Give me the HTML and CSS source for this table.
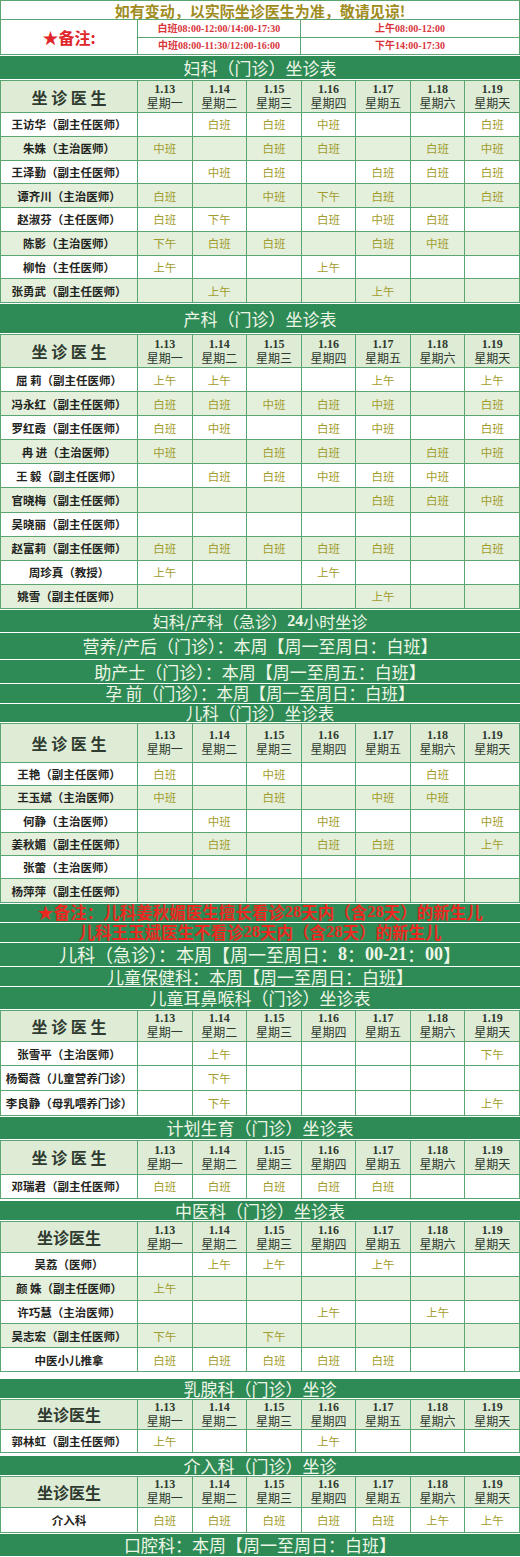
FILE: index.html
```html
<!DOCTYPE html>
<html lang="zh-CN">
<head>
<meta charset="utf-8">
<title>坐诊表</title>
<link rel="stylesheet" href="styles.css">
</head>
<body>
<div class="page">

<table class="notice">
<colgroup><col class="c1"><col class="c2"><col class="c3"></colgroup>
<tr class="top"><td colspan="3" class="warn">如有变动，以实际坐诊医生为准，敬请见谅!</td></tr>
<tr class="tr"><td rowspan="2" class="star">★备注:</td><td class="tm">白班<span class="num">08:00-12:00/14:00-17:30</span></td><td class="tm">上午<span class="num">08:00-12:00</span></td></tr>
<tr class="tr"><td class="tm">中班<span class="num">08:00-11:30/12:00-16:00</span></td><td class="tm">下午<span class="num">14:00-17:30</span></td></tr>
</table>

<div class="band b23">妇科（门诊）坐诊表</div>
<table class="grid striped g-fk">
<colgroup><col class="name"><col><col><col><col><col><col><col></colgroup>
<tr class="hd"><td class="title">坐 诊 医 生</td><td><span class="date">1.13</span><span class="wd">星期一</span></td><td><span class="date">1.14</span><span class="wd">星期二</span></td><td><span class="date">1.15</span><span class="wd">星期三</span></td><td><span class="date">1.16</span><span class="wd">星期四</span></td><td><span class="date">1.17</span><span class="wd">星期五</span></td><td><span class="date">1.18</span><span class="wd">星期六</span></td><td><span class="date">1.19</span><span class="wd">星期天</span></td></tr>
<tr><td class="nm">王访华（副主任医师）</td><td></td><td>白班</td><td>白班</td><td>中班</td><td></td><td></td><td>白班</td></tr>
<tr><td class="nm">朱姝（主治医师）</td><td>中班</td><td></td><td>白班</td><td>白班</td><td></td><td>白班</td><td>中班</td></tr>
<tr><td class="nm">王泽勤（副主任医师）</td><td></td><td>中班</td><td>白班</td><td></td><td>白班</td><td>白班</td><td>白班</td></tr>
<tr><td class="nm">谭齐川（主治医师）</td><td>白班</td><td></td><td>中班</td><td>下午</td><td>白班</td><td></td><td>白班</td></tr>
<tr><td class="nm">赵淑芬（主任医师）</td><td>白班</td><td>下午</td><td></td><td>白班</td><td>中班</td><td>白班</td><td></td></tr>
<tr><td class="nm">陈影（主治医师）</td><td>下午</td><td>白班</td><td>白班</td><td></td><td>白班</td><td>中班</td><td></td></tr>
<tr><td class="nm">柳怡（主任医师）</td><td>上午</td><td></td><td></td><td>上午</td><td></td><td></td><td></td></tr>
<tr><td class="nm">张勇武（副主任医师）</td><td></td><td>上午</td><td></td><td></td><td>上午</td><td></td><td></td></tr>
</table>

<div class="band b29">产科（门诊）坐诊表</div>
<table class="grid striped g-ck">
<colgroup><col class="name"><col><col><col><col><col><col><col></colgroup>
<tr class="hd"><td class="title">坐 诊 医 生</td><td><span class="date">1.13</span><span class="wd">星期一</span></td><td><span class="date">1.14</span><span class="wd">星期二</span></td><td><span class="date">1.15</span><span class="wd">星期三</span></td><td><span class="date">1.16</span><span class="wd">星期四</span></td><td><span class="date">1.17</span><span class="wd">星期五</span></td><td><span class="date">1.18</span><span class="wd">星期六</span></td><td><span class="date">1.19</span><span class="wd">星期天</span></td></tr>
<tr><td class="nm">屈 莉（副主任医师）</td><td>上午</td><td>上午</td><td></td><td></td><td>上午</td><td></td><td>上午</td></tr>
<tr><td class="nm">冯永红（副主任医师）</td><td>白班</td><td>白班</td><td>中班</td><td>白班</td><td>中班</td><td></td><td>白班</td></tr>
<tr><td class="nm">罗红霞（副主任医师）</td><td>白班</td><td>中班</td><td></td><td>白班</td><td>中班</td><td></td><td>白班</td></tr>
<tr><td class="nm">冉 进（主治医师）</td><td>中班</td><td></td><td>白班</td><td>白班</td><td></td><td>白班</td><td>中班</td></tr>
<tr><td class="nm">王 毅（副主任医师）</td><td></td><td>白班</td><td>白班</td><td>中班</td><td>白班</td><td>中班</td><td></td></tr>
<tr><td class="nm">官晓梅（副主任医师）</td><td></td><td></td><td></td><td></td><td>白班</td><td>白班</td><td>中班</td></tr>
<tr><td class="nm">吴晓丽（副主任医师）</td><td></td><td></td><td></td><td></td><td></td><td></td><td></td></tr>
<tr><td class="nm">赵富莉（副主任医师）</td><td>白班</td><td>白班</td><td>白班</td><td>白班</td><td>白班</td><td></td><td>白班</td></tr>
<tr><td class="nm">周珍真（教授）</td><td>上午</td><td></td><td></td><td>上午</td><td></td><td></td><td></td></tr>
<tr><td class="nm">姚雪（副主任医师）</td><td></td><td></td><td></td><td></td><td>上午</td><td></td><td></td></tr>
</table>

<div class="band b22 sm">妇科/产科（急诊）<span class="num">24</span>小时坐诊</div>
<div class="band b26">营养/产后（门诊）：本周【周一至周日：白班】</div>
<div class="band b23">助产士（门诊）：本周【周一至周五：白班】</div>
<div class="band b19 tight">孕 前（门诊）：本周【周一至周日：白班】</div>
<div class="band b18 tight">儿科（门诊）坐诊表</div>
<table class="grid striped g-ek">
<colgroup><col class="name"><col><col><col><col><col><col><col></colgroup>
<tr class="hd"><td class="title">坐 诊 医 生</td><td><span class="date">1.13</span><span class="wd">星期一</span></td><td><span class="date">1.14</span><span class="wd">星期二</span></td><td><span class="date">1.15</span><span class="wd">星期三</span></td><td><span class="date">1.16</span><span class="wd">星期四</span></td><td><span class="date">1.17</span><span class="wd">星期五</span></td><td><span class="date">1.18</span><span class="wd">星期六</span></td><td><span class="date">1.19</span><span class="wd">星期天</span></td></tr>
<tr><td class="nm">王艳（副主任医师）</td><td>白班</td><td></td><td>中班</td><td></td><td></td><td>白班</td><td></td></tr>
<tr><td class="nm">王玉斌（主治医师）</td><td>中班</td><td></td><td>白班</td><td></td><td>中班</td><td>中班</td><td></td></tr>
<tr><td class="nm">何静（主治医师）</td><td></td><td>中班</td><td></td><td>中班</td><td></td><td></td><td>中班</td></tr>
<tr><td class="nm">姜秋媚（副主任医师）</td><td></td><td>白班</td><td></td><td>白班</td><td>白班</td><td></td><td>上午</td></tr>
<tr><td class="nm">张蕾（主治医师）</td><td></td><td></td><td></td><td></td><td></td><td></td><td></td></tr>
<tr><td class="nm">杨萍萍（副主任医师）</td><td></td><td></td><td></td><td></td><td></td><td></td><td></td></tr>
</table>

<div class="band b18 red">★备注：儿科姜秋媚医生擅长看诊<span class="num">28</span>天内（含<span class="num">28</span>天）的新生儿</div>
<div class="band b19 red">儿科王玉斌医生不看诊<span class="num">28</span>天内（含<span class="num">28</span>天）的新生儿</div>
<div class="band b23 lg">儿科（急诊）：本周【周一至周日：<span class="num">8</span>：<span class="num">00-21</span>：<span class="num">00</span>】</div>
<div class="band b19">儿童保健科：本周【周一至周日：白班】</div>
<div class="band b22">儿童耳鼻喉科（门诊）坐诊表</div>
<table class="grid g-ent">
<colgroup><col class="name"><col><col><col><col><col><col><col></colgroup>
<tr class="hd"><td class="title">坐 诊 医 生</td><td><span class="date">1.13</span><span class="wd">星期一</span></td><td><span class="date">1.14</span><span class="wd">星期二</span></td><td><span class="date">1.15</span><span class="wd">星期三</span></td><td><span class="date">1.16</span><span class="wd">星期四</span></td><td><span class="date">1.17</span><span class="wd">星期五</span></td><td><span class="date">1.18</span><span class="wd">星期六</span></td><td><span class="date">1.19</span><span class="wd">星期天</span></td></tr>
<tr><td class="nm">张雪平（主治医师）</td><td></td><td>上午</td><td></td><td></td><td></td><td></td><td>下午</td></tr>
<tr><td class="nm">杨蜀薇（儿童营养门诊）</td><td></td><td>下午</td><td></td><td></td><td></td><td></td><td></td></tr>
<tr><td class="nm">李良静（母乳喂养门诊）</td><td></td><td>下午</td><td></td><td></td><td></td><td></td><td>上午</td></tr>
</table>

<div class="band b22">计划生育（门诊）坐诊表</div>
<table class="grid g-jh">
<colgroup><col class="name"><col><col><col><col><col><col><col></colgroup>
<tr class="hd"><td class="title">坐 诊 医 生</td><td><span class="date">1.13</span><span class="wd">星期一</span></td><td><span class="date">1.14</span><span class="wd">星期二</span></td><td><span class="date">1.15</span><span class="wd">星期三</span></td><td><span class="date">1.16</span><span class="wd">星期四</span></td><td><span class="date">1.17</span><span class="wd">星期五</span></td><td><span class="date">1.18</span><span class="wd">星期六</span></td><td><span class="date">1.19</span><span class="wd">星期天</span></td></tr>
<tr><td class="nm">邓瑞君（副主任医师）</td><td>白班</td><td>白班</td><td>白班</td><td>白班</td><td>白班</td><td></td><td></td></tr>
</table>

<div class="band b19 spaced">中医科（门诊）坐诊表</div>
<table class="grid striped g-zy">
<colgroup><col class="name"><col><col><col><col><col><col><col></colgroup>
<tr class="hd"><td class="title">坐诊医生</td><td><span class="date">1.13</span><span class="wd">星期一</span></td><td><span class="date">1.14</span><span class="wd">星期二</span></td><td><span class="date">1.15</span><span class="wd">星期三</span></td><td><span class="date">1.16</span><span class="wd">星期四</span></td><td><span class="date">1.17</span><span class="wd">星期五</span></td><td><span class="date">1.18</span><span class="wd">星期六</span></td><td><span class="date">1.19</span><span class="wd">星期天</span></td></tr>
<tr><td class="nm">吴荔（医师）</td><td></td><td>上午</td><td>上午</td><td></td><td>上午</td><td></td><td></td></tr>
<tr><td class="nm">颜 姝（副主任医师）</td><td>上午</td><td></td><td></td><td></td><td></td><td></td><td></td></tr>
<tr><td class="nm">许巧慧（主治医师）</td><td></td><td></td><td></td><td>上午</td><td></td><td>上午</td><td></td></tr>
<tr><td class="nm">吴志宏（副主任医师）</td><td>下午</td><td></td><td>下午</td><td></td><td></td><td></td><td></td></tr>
<tr><td class="nm">中医小儿推拿</td><td>白班</td><td>白班</td><td>白班</td><td>白班</td><td>白班</td><td></td><td></td></tr>
</table>

<div class="band b19 spaced-lg">乳腺科（门诊）坐诊</div>
<table class="grid g-rx">
<colgroup><col class="name"><col><col><col><col><col><col><col></colgroup>
<tr class="hd"><td class="title">坐诊医生</td><td><span class="date">1.13</span><span class="wd">星期一</span></td><td><span class="date">1.14</span><span class="wd">星期二</span></td><td><span class="date">1.15</span><span class="wd">星期三</span></td><td><span class="date">1.16</span><span class="wd">星期四</span></td><td><span class="date">1.17</span><span class="wd">星期五</span></td><td><span class="date">1.18</span><span class="wd">星期六</span></td><td><span class="date">1.19</span><span class="wd">星期天</span></td></tr>
<tr><td class="nm">郭林虹（副主任医师）</td><td>上午</td><td></td><td></td><td>上午</td><td></td><td></td><td></td></tr>
</table>

<div class="band b19 spaced-md">介入科（门诊）坐诊</div>
<table class="grid g-jr">
<colgroup><col class="name"><col><col><col><col><col><col><col></colgroup>
<tr class="hd"><td class="title">坐诊医生</td><td><span class="date">1.13</span><span class="wd">星期一</span></td><td><span class="date">1.14</span><span class="wd">星期二</span></td><td><span class="date">1.15</span><span class="wd">星期三</span></td><td><span class="date">1.16</span><span class="wd">星期四</span></td><td><span class="date">1.17</span><span class="wd">星期五</span></td><td><span class="date">1.18</span><span class="wd">星期六</span></td><td><span class="date">1.19</span><span class="wd">星期天</span></td></tr>
<tr><td class="nm">介入科</td><td>白班</td><td>白班</td><td>白班</td><td>白班</td><td>白班</td><td>上午</td><td>上午</td></tr>
</table>

<div class="band b22">口腔科：本周【周一至周日：白班】</div>

</div>
</body>
</html>
```

FILE: styles.css
```css
* { box-sizing: border-box; }
html, body { margin: 0; padding: 0; background: #ffffff; }
body { font-family: "Noto Sans CJK SC", "Noto Sans", sans-serif; }

.page {
  width: 520px;
  display: flex;
  flex-direction: column;
  gap: 1px;
  background: #ffffff;
}

/* ---------- top notice ---------- */
.notice {
  width: 520px;
  border-collapse: collapse;
  table-layout: fixed;
  border: 1px solid #3f9560;
}
.notice .c1 { width: 137px; }
.notice .c2 { width: 163px; }
.notice td {
  border: 1px solid #5aa572;
  text-align: center;
  padding: 0;
  background: #ffffff;
}
.notice .top td { height: 19px; }
.notice .tr td { height: 17.5px; }
.warn {
  color: #a08c1e;
  font-size: 15px;
  font-weight: bold;
  line-height: 17px;
}
.star {
  color: #e0262a;
  font-size: 16px;
  font-weight: bold;
}
.tm {
  color: #d9343a;
  font-size: 10px;
  font-weight: bold;
  line-height: 12px;
}
.num {
  font-family: "Liberation Serif", "DejaVu Serif", serif;
  font-weight: bold;
}

/* ---------- green bands ---------- */
.band {
  background: #2e8b56;
  color: #eef6e6;
  font-size: 17px;
  line-height: 1;
  display: flex;
  align-items: center;
  justify-content: center;
  white-space: nowrap;
}
.band.sm { font-size: 16px; }
.band.lg { font-size: 18px; }
.band.tight { font-size: 16.5px; }
.band.red { color: #ea2a20; font-weight: bold; font-size: 16.5px; }
.band.spaced { margin-top: 1px; }
.band.spaced-md { margin-top: 2px; }
.band.spaced-lg { margin-top: 6px; }
.b18 { height: 18px; }
.b19 { height: 19px; }
.b22 { height: 22px; }
.b23 { height: 23px; }
.b26 { height: 26px; }
.b29 { height: 29px; }

/* ---------- schedule grids ---------- */
.grid {
  width: 520px;
  border-collapse: collapse;
  table-layout: fixed;
  border: 1px solid #3f9560;
}
.grid col.name { width: 137px; }
.grid td {
  border: 1px solid #5aa572;
  text-align: center;
  vertical-align: middle;
  padding: 0;
  background: #ffffff;
  color: #a19d2c;
  font-size: 11.5px;
  line-height: 14px;
  height: var(--rh);
}
.grid tr.hd td {
  background: #deecd5;
  height: var(--hh);
  color: #2f3a30;
}
.striped tr:nth-child(odd):not(.hd) td { background: #e4efdc; }

.grid td.nm {
  color: #1f2420;
  font-weight: bold;
  font-size: 11.5px;
  white-space: nowrap;
  overflow: hidden;
}
.grid td.title {
  font-size: 16px;
  font-weight: bold;
  color: #2c3a2e;
}
.date {
  display: block;
  font-family: "Liberation Serif", "DejaVu Serif", serif;
  font-weight: bold;
  font-size: 12px;
  line-height: 13px;
}
.wd {
  display: block;
  font-size: 12px;
  line-height: 14px;
}

.g-fk  { --hh: 32px; --rh: 23.75px; }
.g-ck  { --hh: 33px; --rh: 24.1px; }
.g-ek  { --hh: 39px; --rh: 23.3px; }
.g-ent { --hh: 31px; --rh: 24.6px; }
.g-jh  { --hh: 34px; --rh: 24.5px; }
.g-zy  { --hh: 31px; --rh: 23.8px; }
.g-rx  { --hh: 30px; --rh: 23px; }
.g-jr  { --hh: 31px; --rh: 25px; }
```
